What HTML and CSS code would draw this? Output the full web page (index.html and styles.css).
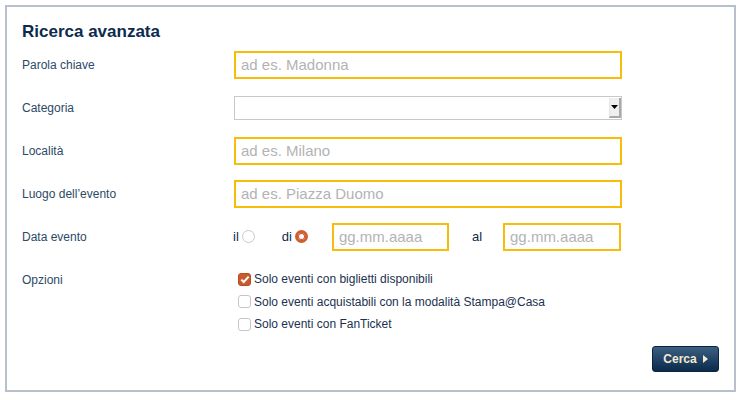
FILE: index.html
```html
<!DOCTYPE html>
<html lang="it">
<head>
<meta charset="utf-8">
<link rel="stylesheet" href="styles.css">
</head>
<body>
<div class="panel">
  <h2 class="title">Ricerca avanzata</h2>
  <div class="row">
    <label class="lbl">Parola chiave</label>
    <input class="field" type="text" placeholder="ad es. Madonna">
  </div>
  <div class="row">
    <label class="lbl">Categoria</label>
    <div class="select"><span class="select-btn"><svg width="7" height="4" viewBox="0 0 7 4"><path d="M0 0h7L3.5 4z" fill="#000"/></svg></span></div>
  </div>
  <div class="row">
    <label class="lbl">Località</label>
    <input class="field" type="text" placeholder="ad es. Milano">
  </div>
  <div class="row">
    <label class="lbl">Luogo dell’evento</label>
    <input class="field" type="text" placeholder="ad es. Piazza Duomo">
  </div>
  <div class="row">
    <label class="lbl">Data evento</label>
    <div class="dates">
      <span class="rtxt">il</span><span class="radio"></span>
      <span class="rtxt di">di</span><span class="radio on"></span>
      <input class="field date d1" type="text" placeholder="gg.mm.aaaa">
      <span class="al">al</span>
      <input class="field date d2" type="text" placeholder="gg.mm.aaaa">
    </div>
  </div>
  <div class="row opts">
    <label class="lbl opt-lbl">Opzioni</label>
    <div class="checks">
      <div class="chk"><span class="box on"><svg width="10" height="9" viewBox="0 0 10 9"><path d="M1.3 4.6l2.4 2.4L8.7 1.6" fill="none" stroke="#fff" stroke-width="2"/></svg></span>Solo eventi con biglietti disponibili</div>
      <div class="chk"><span class="box"></span>Solo eventi acquistabili con la modalità Stampa@Casa</div>
      <div class="chk"><span class="box"></span>Solo eventi con FanTicket</div>
    </div>
  </div>
  <div class="actions">
    <button class="btn">Cerca<svg width="5" height="8" viewBox="0 0 5 8"><path d="M0 0l5 4-5 4z" fill="#f3ead0"/></svg></button>
  </div>
</div>
</body>
</html>
```
FILE: styles.css
```css
* { box-sizing: border-box; }
body {
  margin: 0;
  background: #fff;
  font-family: "Liberation Sans", Arial, sans-serif;
}
.panel {
  margin: 5px;
  width: 731px;
  height: 387px;
  border: 2px solid #b6c1cd;
  padding: 0 15px 0 15px;
}
.title {
  margin: 0;
  height: 36px;
  padding-top: 15px;
  font-size: 17px;
  line-height: 20px;
  font-weight: bold;
  color: #0c2b4e;
}
.row {
  display: grid;
  grid-template-columns: 212px 388px;
  align-items: center;
  height: 43px;
}
.lbl {
  font-size: 12px;
  color: #2d4966;
}
.field {
  height: 28px;
  border: 2px solid #f7bd0a;
  padding: 0 5px;
  font-family: "Liberation Sans", Arial, sans-serif;
  font-size: 15px;
  outline: none;
  width: 388px;
}
.field::placeholder { color: #b3b3b3; }
.select {
  height: 24px;
  border: 1px solid #c9c9c9;
  display: flex;
  justify-content: flex-end;
  padding: 1px 0 1px;
}
.select-btn {
  width: 12px;
  background: #efefef;
  border-right: 2px solid #a9a9a9;
  border-bottom: 2px solid #a9a9a9;
  border-left: 1px solid #e6e6e6;
  display: flex;
  align-items: center;
  justify-content: center;
}
.dates {
  display: flex;
  align-items: center;
  margin-left: -1px;
  font-size: 13px;
  color: #0c2b4e;
}
.rtxt { margin-right: 3px; }
.radio {
  width: 13px;
  height: 13px;
  border-radius: 50%;
  border: 1px solid #c9c9c9;
  background: #fff;
}
.radio.on {
  border: 3px solid #d25e2e;
  background: #fff;
  box-shadow: 0 0 0 1px #c4562a inset;
}
.di { margin-left: 27px; }
.date { width: 118px; }
.d1 { margin-left: 24px; width: 117px; }
.al { margin-left: 23px; margin-right: 21px; }
.opts {
  align-items: start;
  height: auto;
  padding-top: 11px;
}
.opt-lbl { margin-top: 4px; }
.checks {
  margin-left: 4px;
  margin-top: -1px;
  font-size: 12px;
  color: #1b3150;
}
.chk {
  display: flex;
  align-items: center;
  height: 22.5px;
}
.box {
  width: 13px;
  height: 13px;
  border: 1px solid #c6c6c6;
  border-radius: 3px;
  margin-right: 3px;
  background: #fff;
  display: flex;
  align-items: center;
  justify-content: center;
}
.box.on {
  background: #c95a2e;
  border-color: #b54d24;
}
.actions {
  display: flex;
  justify-content: flex-end;
  margin-top: 10px;
}
.btn {
  width: 67px;
  height: 26px;
  border: 1px solid #0a2440;
  border-radius: 3px;
  background: linear-gradient(#3b5f82, #0b2a4c);
  color: #f3ead0;
  font-family: "Liberation Sans", Arial, sans-serif;
  font-weight: bold;
  font-size: 12px;
  display: flex;
  align-items: center;
  justify-content: center;
  gap: 6px;
  padding: 0;
}
```
